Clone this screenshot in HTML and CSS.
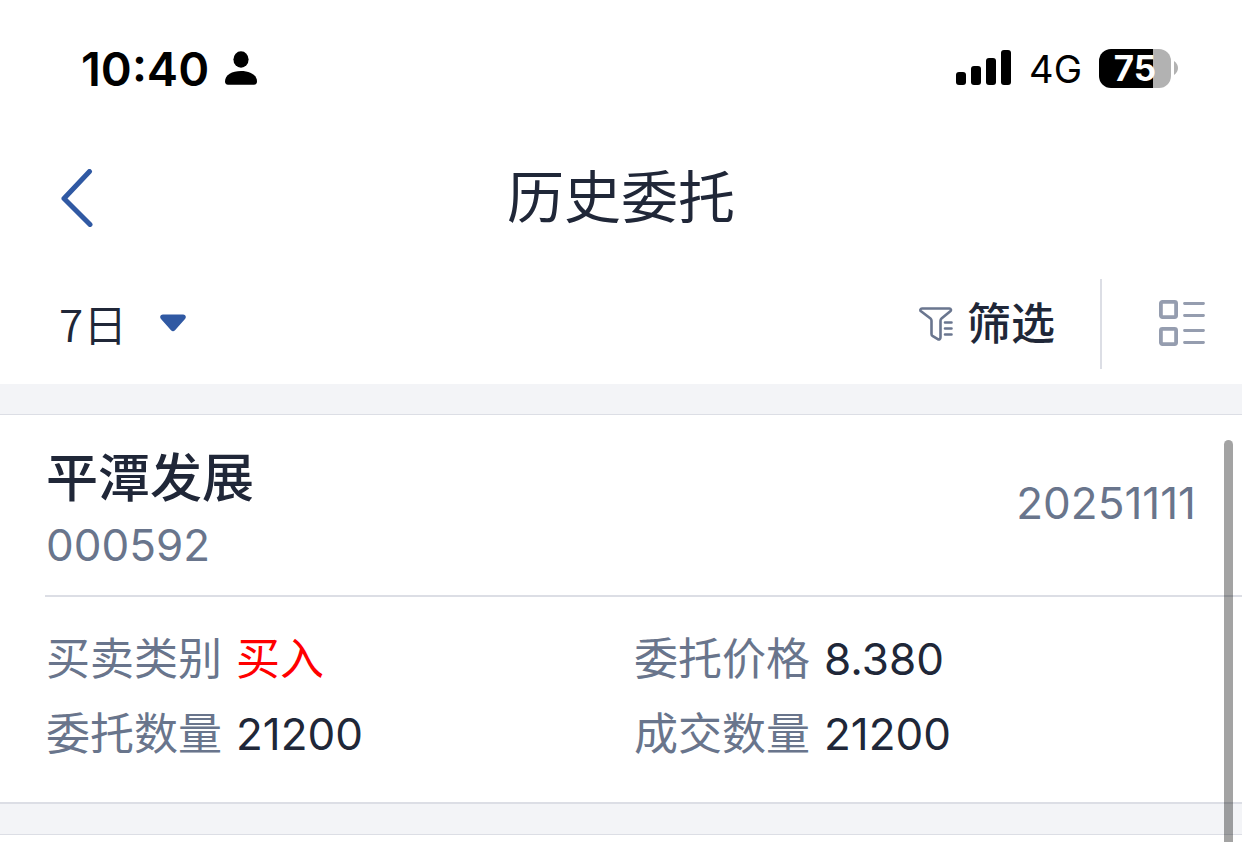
FILE: index.html
```html
<!DOCTYPE html>
<html lang="zh-CN">
<head>
<meta charset="utf-8">
<meta name="viewport" content="width=device-width, initial-scale=1">
<title>历史委托</title>
<link rel="stylesheet" href="styles.css">
</head>
<body>
<div class="status">
  <div class="status-left">
    <time class="clock">10:40</time>
    <svg class="person" viewBox="0 0 32 34" width="32" height="34" aria-hidden="true"><ellipse cx="16" cy="8.500" rx="7.600" ry="8.200"/><path d="M0 30.500C0 24 7 20 16 20s16 4 16 10.500c0 2-1 3.200-3 3.200H3c-2 0-3-1.200-3-3.200Z"/></svg>
  </div>
  <div class="status-right">
    <svg viewBox="0 0 56 36" width="56" height="36" aria-hidden="true"><rect x="0" y="22" width="10" height="13" rx="3"/><rect x="15" y="16" width="10" height="19" rx="3"/><rect x="30" y="8" width="10" height="27" rx="3"/><rect x="45" y="0" width="10" height="35" rx="3"/></svg>
    <span class="network">4G</span>
    <div class="battery">
      <span class="battery-body">75</span>
      <svg viewBox="0 0 4 14" width="4" height="14" aria-hidden="true"><path fill="#b2b2b2" d="M0 0Q4 3 4 7T0 14Z"/></svg>
    </div>
  </div>
</div>

<header class="nav">
  <button class="back" type="button" aria-label="返回">
    <svg viewBox="0 0 32 58" width="32" height="58" aria-hidden="true"><path d="M28.500 2.500 3 29.500l26 26" fill="none" stroke="#3059a3" stroke-width="5" stroke-linecap="round" stroke-linejoin="round"/></svg>
  </button>
  <h1 class="title">历史委托</h1>
</header>

<div class="toolbar">
  <label class="period">
    <select class="period-select" aria-label="时间范围"><option>7日</option></select>
    <svg viewBox="0 0 26 18" width="26" height="18" aria-hidden="true"><path fill="#3059a3" d="M3 .5h20c2.600 0 3.700 2.600 2 4.400L15 16.200c-1.200 1.300-2.800 1.300-4 0L1 4.900C-.7 3.100.4.500 3 .5Z"/></svg>
  </label>
  <button class="filter" type="button">
    <svg viewBox="0 0 34 34" width="34" height="34" fill="none" stroke="#6a768f" stroke-width="2.600" stroke-linecap="round" stroke-linejoin="round" aria-hidden="true"><path d="M3 1.500h27.500c1.500 0 2 1.800.8 2.800L22.500 11.500q-1 .8-1 2.200v16.500c0 1.800-1.200 2.600-2.700 2l-5-3q-1.300-.8-1.300-2.300V13.700q0-1.400-1-2.200L2 4.300C.8 3.300 1.500 1.500 3 1.500Z"/><path d="M26 15.500h6.500M26 21.500h6.500M26 27.500h6.500"/></svg>
    筛选
  </button>
  <button class="view" type="button" aria-label="切换视图">
    <svg viewBox="0 0 46 46" width="46" height="46" fill="none" stroke="#959daf" aria-hidden="true"><g stroke-width="3.800"><rect x="1.900" y="1.900" width="15.200" height="15.200" rx="1.500"/><rect x="1.900" y="28.900" width="15.200" height="15.200" rx="1.500"/></g><path stroke-width="2.800" stroke-linecap="round" d="M25.500 3.500h19M25.500 15.500h19M25.500 30.500h19M25.500 42.500h19"/></svg>
  </button>
</div>

<main class="list">
  <article class="order">
    <div class="order-head">
      <div>
        <h2 class="name">平潭发展</h2>
        <p class="code">000592</p>
      </div>
      <time class="date">20251111</time>
    </div>
    <dl class="details">
      <div class="field"><dt>买卖类别</dt><dd class="buy">买入</dd></div>
      <div class="field"><dt>委托价格</dt><dd>8.380</dd></div>
      <div class="field"><dt>委托数量</dt><dd>21200</dd></div>
      <div class="field"><dt>成交数量</dt><dd>21200</dd></div>
    </dl>
  </article>
  <article class="order next"></article>
</main>
<div class="scroll-thumb"></div>
</body>
</html>
```
FILE: styles.css
```css
* { box-sizing: border-box; }

body {
  margin: 0;
  min-height: 100vh;
  display: flex;
  flex-direction: column;
  background: #fff;
  color: #202738;
  font-family: Inter, "Noto Sans CJK SC", sans-serif;
  font-size: 44px;
}

h1, h2, p, dl, dd { margin: 0; }
svg { display: block; flex: none; }

button, select {
  border: 0;
  padding: 0;
  background: none;
  color: inherit;
  font: inherit;
  appearance: none;
}

.status {
  display: flex;
  justify-content: space-between;
  align-items: center;
  height: 136px;
  flex: none;
  padding: 0 64px 0 81px;
  color: #000;
}

.status-left, .status-right, .battery { display: flex; align-items: center; }
.status-left { gap: 16px; }
.clock { font-size: 47px; font-weight: 600; }
.status-right { gap: 17px; }
.network { font-size: 38px; line-height: 44px; padding-top: 2px; }
.battery { gap: 3px; }

.battery-body {
  width: 72px;
  border-radius: 12px;
  background: linear-gradient(to right, #000 75%, #b2b2b2 75%);
  color: #fff;
  font-size: 35px;
  font-weight: 700;
  line-height: 39px;
  text-align: center;
}

.nav {
  display: grid;
  grid-template-columns: 1fr auto 1fr;
  align-items: center;
  height: 124px;
  flex: none;
  padding: 0 61px;
}

.back { justify-self: start; }
.title { font-size: 57px; font-weight: 400; line-height: 80px; }

.toolbar {
  display: flex;
  align-items: center;
  height: 124px;
  flex: none;
  padding: 4px 0 0 59px;
}

.period {
  display: flex;
  align-items: center;
  gap: 32px;
  margin-right: auto;
  padding-bottom: 2px;
  font-family: "Noto Sans CJK SC", sans-serif;
  font-weight: 350;
}

.filter { display: flex; align-items: center; gap: 14px; padding: 0 45px 0 0; font-weight: 500; line-height: 60px; }
.view { height: 90px; padding: 0 37px 2px 57px; border-left: 2px solid #dcdee5; }

.list { flex: 1; display: flex; flex-direction: column; background: #f3f4f7; }

.order {
  margin-top: 30px;
  border-top: 1px solid #dcdee5;
  border-bottom: 2px solid #dcdee5;
  background: #fff;
}

.next { flex: 1; border-bottom: 0; }

.order-head {
  display: flex;
  justify-content: space-between;
  margin-left: 45px;
  padding: 28px 46px 20px 1px;
  border-bottom: 2px solid #dcdee5;
}

.name { font-size: 52px; font-weight: 500; line-height: 72px; }
.code { line-height: 60px; }
.code, .date, dt { color: #69758c; }
.date { line-height: 120px; }

.details {
  display: grid;
  grid-template-columns: 1fr 1fr;
  padding: 25px 20px 30px 46px;
  line-height: 75px;
}

.field { display: flex; gap: 14px; }
.buy { color: #f00; }

.scroll-thumb {
  position: absolute;
  top: 440px;
  right: 9px;
  bottom: 0;
  width: 9px;
  border-radius: 5px 5px 0 0;
  background: rgba(0, 0, 0, 0.36);
}
```
